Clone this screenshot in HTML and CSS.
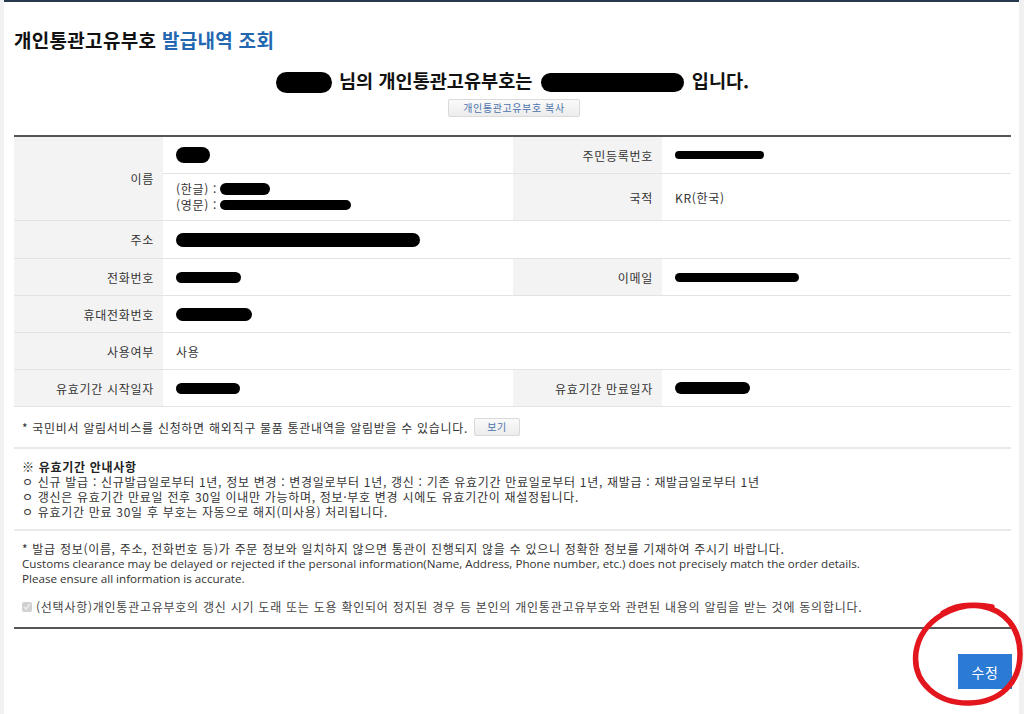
FILE: index.html
```html
<!DOCTYPE html>
<html lang="ko">
<head>
<meta charset="utf-8">
<title>개인통관고유부호 발급내역 조회</title>
<link rel="stylesheet" href="styles.css">
</head>
<body>
<div class="page">
  <h1 class="title">개인통관고유부호 <span class="title-blue">발급내역 조회</span></h1>
  <p class="greeting"><span class="blob blob-greet-name"></span> 님의 개인통관고유부호는 <span class="blob blob-greet-code"></span> 입니다.</p>
  <div class="copy-row"><button class="btn-small btn-copy" type="button">개인통관고유부호 복사</button></div>

  <div class="info">
    <div class="cell label label-name">이름</div>
    <div class="cell value"><span class="blob blob-name"></span></div>
    <div class="cell label">주민등록번호</div>
    <div class="cell value"><span class="blob blob-rrn"></span></div>

    <div class="cell value value-names">
      <div class="name-line">(한글) : <span class="blob blob-kor"></span></div>
      <div class="name-line">(영문) : <span class="blob blob-eng"></span></div>
    </div>
    <div class="cell label">국적</div>
    <div class="cell value">KR(한국)</div>

    <div class="cell label">주소</div>
    <div class="cell value wide"><span class="blob blob-addr"></span></div>

    <div class="cell label">전화번호</div>
    <div class="cell value"><span class="blob blob-tel"></span></div>
    <div class="cell label">이메일</div>
    <div class="cell value"><span class="blob blob-mail"></span></div>

    <div class="cell label">휴대전화번호</div>
    <div class="cell value wide"><span class="blob blob-mobile"></span></div>

    <div class="cell label">사용여부</div>
    <div class="cell value wide">사용</div>

    <div class="cell label">유효기간 시작일자</div>
    <div class="cell value"><span class="blob blob-start"></span></div>
    <div class="cell label">유효기간 만료일자</div>
    <div class="cell value"><span class="blob blob-end"></span></div>
  </div>

  <div class="notice">
    <span>* 국민비서 알림서비스를 신청하면 해외직구 물품 통관내역을 알림받을 수 있습니다.</span>
    <button class="btn-small btn-view" type="button">보기</button>
  </div>

  <div class="guide">
    <p class="guide-title">※ 유효기간 안내사항</p>
    <p>ㅇ 신규 발급 : 신규발급일로부터 1년, 정보 변경 : 변경일로부터 1년, 갱신 : 기존 유효기간 만료일로부터 1년, 재발급 : 재발급일로부터 1년</p>
    <p>ㅇ 갱신은 유효기간 만료일 전후 30일 이내만 가능하며, 정보·부호 변경 시에도 유효기간이 재설정됩니다.</p>
    <p>ㅇ 유효기간 만료 30일 후 부호는 자동으로 해지(미사용) 처리됩니다.</p>
  </div>

  <div class="warning">
    <p>* 발급 정보(이름, 주소, 전화번호 등)가 주문 정보와 일치하지 않으면 통관이 진행되지 않을 수 있으니 정확한 정보를 기재하여 주시기 바랍니다.</p>
    <p class="en">Customs clearance may be delayed or rejected if the personal information(Name, Address, Phone number, etc.) does not precisely match the order details.</p>
    <p class="en">Please ensure all information is accurate.</p>
  </div>

  <label class="agree"><input class="agree-check" type="checkbox" checked disabled>(선택사항)개인통관고유부호의 갱신 시기 도래 또는 도용 확인되어 정지된 경우 등 본인의 개인통관고유부호와 관련된 내용의 알림을 받는 것에 동의합니다.</label>

  <div class="actions">
    <button class="btn-primary" type="button">수정</button>
  </div>
</div>
<svg class="marker" width="116" height="112" viewBox="0 0 116 112" aria-hidden="true">
  <path d="M84 9 C48 1 13 22 8 54 C4 85 30 106 62 105 C93 104 112 84 112 56 C112 30 97 12 73 8 C60 6 46 8 35 15" fill="none" stroke="#e3161e" stroke-width="5.5" stroke-linecap="round"/>
</svg>
</body>
</html>
```

FILE: styles.css
```css
html, body {
  margin: 0;
  padding: 0;
}
body {
  background: #f1f1f1;
  font-family: "Noto Sans CJK KR", "Noto Sans", sans-serif;
  color: #333;
  position: relative;
  letter-spacing: 0.7px;
}
.page {
  margin: 0 5px 0 4px;
  background: #fff;
  border-top: 2px solid #27394e;
  min-height: 714px;
  padding: 0 8px 0 10px;
  box-sizing: border-box;
}
.title {
  margin: 0;
  padding-top: 26px;
  font-size: 19px;
  line-height: 24px;
  font-weight: 700;
  color: #111;
  letter-spacing: 0.3px;
}
.title-blue {
  color: #2467b1;
}
.greeting {
  margin: 16px 0 0;
  text-align: center;
  font-size: 18.6px;
  line-height: 24px;
  font-weight: 700;
  color: #111;
  letter-spacing: 0;
}
.blob {
  display: inline-block;
  background: #000;
  border-radius: 12px;
  vertical-align: middle;
}
.blob-greet-name { width: 56px; height: 21px; margin-right: 2px; }
.blob-greet-code { width: 143px; height: 19px; margin: 0 3px; }
.blob-name { width: 34px; height: 16px; }
.blob-rrn { width: 89px; height: 8px; }
.blob-kor { width: 50px; height: 12px; }
.blob-eng { width: 131px; height: 10px; }
.blob-addr { width: 244px; height: 14px; }
.blob-tel { width: 65px; height: 11px; }
.blob-mail { width: 124px; height: 9px; }
.blob-mobile { width: 76px; height: 13px; }
.blob-start { width: 64px; height: 11px; }
.blob-end { width: 75px; height: 12px; }

.copy-row {
  display: flex;
  justify-content: center;
  margin-top: 6px;
  padding-left: 3px;
}
.btn-small {
  font-family: "Noto Sans CJK KR", sans-serif;
  height: 18px;
  padding: 0;
  font-size: 10px;
  line-height: 16px;
  letter-spacing: 0.6px;
  color: #4b72ab;
  background: linear-gradient(#fafafa, #ececec);
  border: 1px solid #dadada;
  border-radius: 2px;
  box-sizing: border-box;
}
.btn-copy { width: 132px; }
.btn-view { width: 46px; margin-left: 6px; }

.info {
  margin-top: 18px;
  display: grid;
  grid-template-columns: 149px 350px 149px 1fr;
  grid-template-rows: 37px 47px 38px 37px 37px 37px 37px;
  border-top: 2px solid #555;
}
.cell {
  display: flex;
  align-items: center;
  border-bottom: 1px solid #e3e3e3;
  font-size: 12px;
  box-sizing: border-box;
  color: #333;
}
.label {
  background: #f3f3f3;
  justify-content: flex-end;
  padding-right: 9px;
}
.label-name {
  grid-row: span 2;
}
.value {
  padding-left: 13px;
}
.wide {
  grid-column: span 3;
}
.value-names {
  flex-direction: column;
  align-items: flex-start;
  justify-content: center;
  line-height: 16px;
}
.name-line {
  display: flex;
  align-items: center;
  gap: 3px;
}

.notice {
  height: 40px;
  display: flex;
  align-items: center;
  padding-left: 8px;
  font-size: 12px;
  color: #333;
  border-bottom: 2px solid #e9e9e9;
}
.guide {
  padding: 10px 8px;
  font-size: 12px;
  line-height: 15px;
  color: #333;
  border-bottom: 2px solid #e9e9e9;
}
.guide p, .warning p {
  margin: 0;
}
.guide-title {
  font-weight: 700;
  color: #222;
}
.warning {
  padding: 10px 8px 0;
  font-size: 12px;
  line-height: 15px;
  color: #333;
}
.en {
  font-family: "Open Sans", "Noto Sans", sans-serif;
  font-size: 11.65px;
  letter-spacing: 0;
}
.agree {
  display: flex;
  align-items: center;
  padding: 13px 8px 13px;
  font-size: 12px;
  line-height: 15px;
  color: #444;
  letter-spacing: 0.75px;
  border-bottom: 2px solid #555;
}
.agree-check {
  width: 10px;
  height: 10px;
  margin: 0 4px 0 0;
}
.actions {
  display: flex;
  justify-content: flex-end;
  margin-top: 25px;
}
.btn-primary {
  width: 54px;
  height: 35px;
  border: 0;
  background: #2b7bd4;
  color: #fff;
  font-family: "Noto Sans CJK KR", sans-serif;
  font-size: 14px;
  letter-spacing: 0.5px;
  margin-right: -1px;
}
.marker {
  position: absolute;
  left: 908px;
  top: 598px;
}
```
